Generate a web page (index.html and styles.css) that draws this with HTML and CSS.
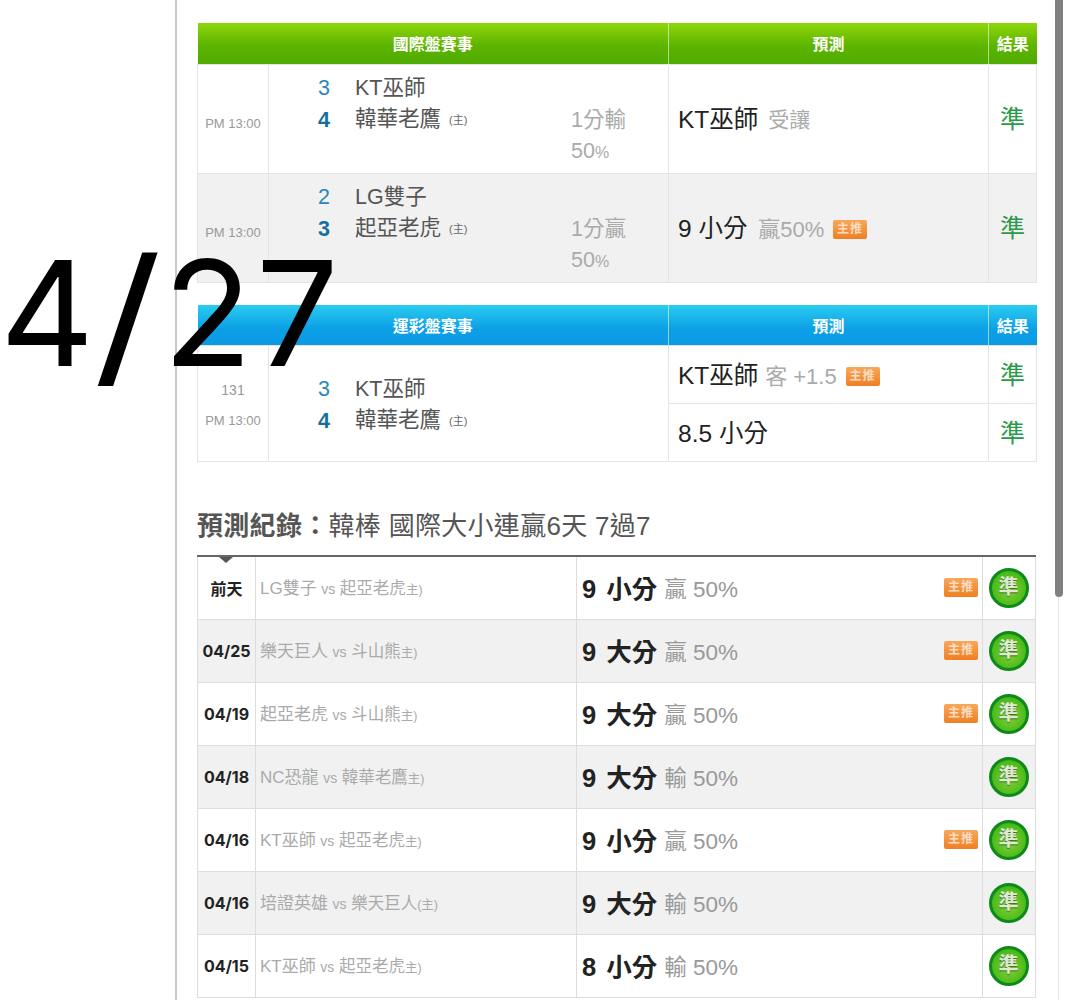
FILE: index.html
```html
<!DOCTYPE html>
<html lang="zh-Hant">
<head>
<meta charset="utf-8">
<title>預測紀錄</title>
<link rel="stylesheet" href="styles.css">
</head>
<body>
<div class="page">
  <main class="main">
    <table class="games first">
      <colgroup><col class="c-time"><col class="c-game"><col class="c-pred"><col class="c-res"></colgroup>
      <thead class="green"><tr><th colspan="2">國際盤賽事</th><th>預測</th><th>結果</th></tr></thead>
      <tbody>
        <tr class="tall">
          <td class="time">PM 13:00</td>
          <td><div class="match">
            <span class="score">3</span><span class="team">KT巫師</span>
            <b class="score">4</b><span class="team">韓華老鷹 <small>(主)</small></span><span class="line">1分輸</span>
            <span class="line pct">50<small>%</small></span>
          </div></td>
          <td class="pred">KT巫師 <em class="concede">受讓</em></td>
          <td class="res">準</td>
        </tr>
        <tr class="tall alt">
          <td class="time">PM 13:00</td>
          <td><div class="match">
            <span class="score">2</span><span class="team">LG雙子</span>
            <b class="score">3</b><span class="team">起亞老虎 <small>(主)</small></span><span class="line">1分贏</span>
            <span class="line pct">50<small>%</small></span>
          </div></td>
          <td class="pred">9 小分 <em>贏50%</em> <i class="badge">主推</i></td>
          <td class="res">準</td>
        </tr>
      </tbody>
    </table>

    <table class="games">
      <colgroup><col class="c-time"><col class="c-game"><col class="c-pred"><col class="c-res"></colgroup>
      <thead class="blue"><tr><th colspan="2">運彩盤賽事</th><th>預測</th><th>結果</th></tr></thead>
      <tbody>
        <tr class="short">
          <td class="time lone" rowspan="2"><div class="num">131</div>PM 13:00</td>
          <td rowspan="2"><div class="match">
            <span class="score">3</span><span class="team">KT巫師</span>
            <b class="score">4</b><span class="team">韓華老鷹 <small>(主)</small></span>
          </div></td>
          <td class="pred">KT巫師 <em class="guest">客 +1.5</em> <i class="badge">主推</i></td>
          <td class="res">準</td>
        </tr>
        <tr class="short">
          <td class="pred">8.5 小分</td>
          <td class="res">準</td>
        </tr>
      </tbody>
    </table>

    <h2 class="title"><strong>預測紀錄：</strong>韓棒 國際大小連贏6天 7過7</h2>

    <div class="history-wrap">
      <span class="pointer"></span>
      <table class="history">
        <colgroup><col class="h-date"><col class="h-teams"><col class="h-pred"><col class="h-res"></colgroup>
        <tbody>
          <tr>
            <td class="date">前天</td>
            <td class="vs"><span>LG雙子</span> <small>vs</small> 起亞老虎<u>主)</u></td>
            <td class="call"><div class="call-row"><b>9 小分</b> <em>贏 50%</em><i class="badge">主推</i></div></td>
            <td class="hit"><span class="ball">準</span></td>
          </tr>
          <tr class="alt">
            <td class="date">04/25</td>
            <td class="vs"><span>樂天巨人</span> <small>vs</small> 斗山熊<u>主)</u></td>
            <td class="call"><div class="call-row"><b>9 大分</b> <em>贏 50%</em><i class="badge">主推</i></div></td>
            <td class="hit"><span class="ball">準</span></td>
          </tr>
          <tr>
            <td class="date">04/19</td>
            <td class="vs"><span>起亞老虎</span> <small>vs</small> 斗山熊<u>主)</u></td>
            <td class="call"><div class="call-row"><b>9 大分</b> <em>贏 50%</em><i class="badge">主推</i></div></td>
            <td class="hit"><span class="ball">準</span></td>
          </tr>
          <tr class="alt">
            <td class="date">04/18</td>
            <td class="vs"><span>NC恐龍</span> <small>vs</small> 韓華老鷹<u>主)</u></td>
            <td class="call"><div class="call-row"><b>9 大分</b> <em>輸 50%</em></div></td>
            <td class="hit"><span class="ball">準</span></td>
          </tr>
          <tr>
            <td class="date">04/16</td>
            <td class="vs"><span>KT巫師</span> <small>vs</small> 起亞老虎<u>主)</u></td>
            <td class="call"><div class="call-row"><b>9 小分</b> <em>贏 50%</em><i class="badge">主推</i></div></td>
            <td class="hit"><span class="ball">準</span></td>
          </tr>
          <tr class="alt">
            <td class="date">04/16</td>
            <td class="vs"><span>培證英雄</span> <small>vs</small> 樂天巨人<u>(主)</u></td>
            <td class="call"><div class="call-row"><b>9 大分</b> <em>輸 50%</em></div></td>
            <td class="hit"><span class="ball">準</span></td>
          </tr>
          <tr>
            <td class="date">04/15</td>
            <td class="vs"><span>KT巫師</span> <small>vs</small> 起亞老虎<u>主)</u></td>
            <td class="call"><div class="call-row"><b>8 小分</b> <em>輸 50%</em></div></td>
            <td class="hit"><span class="ball">準</span></td>
          </tr>
        </tbody>
      </table>
    </div>
  </main>
  <span class="thumb"></span>
  <div class="stamp">4<span class="slash">/</span>27</div>
</div>
</body>
</html>
```

FILE: styles.css
```css
* { box-sizing: border-box; }
html, body { margin: 0; padding: 0; height: 1000px; overflow: hidden; background: #fff; }
body { font-family: "Liberation Sans", "Noto Sans CJK TC", sans-serif; color: #222; }

.page { position: relative; height: 1000px; overflow: hidden; padding-left: 175px; }
.main {
  position: relative;
  width: 884px;
  height: 1000px;
  padding: 23px 0 0 20px;
  border-left: 2px solid #c9c9c9;
  border-right: 1px solid #e2e2e2;
  overflow: hidden;
}
.thumb {
  position: absolute;
  left: 1055px;
  top: -10px;
  width: 8px;
  height: 607px;
  background: #808080;
  border-radius: 0 0 4px 4px;
}
.stamp {
  position: absolute;
  left: 0;
  top: 228px;
  font-family: "Inter", "Liberation Sans", sans-serif;
  font-weight: 400;
  font-size: 146px;
  letter-spacing: 4px;
  line-height: 170px;
  color: #000;
  white-space: nowrap;
}
.slash { display: inline-block; margin: 0 4px; transform: scale(1.3, 1.05); }

/* match tables */
.games {
  width: 839px;
  table-layout: fixed;
  border-collapse: collapse;
  margin-bottom: 23px;
}
.games.first { margin-bottom: 22px; }
.c-time { width: 71px; }
.c-game { width: 400px; }
.c-pred { width: 320px; }
.c-res { width: 48px; }
.games th {
  height: 41px;
  padding: 0;
  font-size: 16px;
  font-weight: bold;
  color: #fff;
  border-left: 1px solid rgba(255, 255, 255, .55);
}
.games th:first-child { border-left: 0; }
.green th { background: linear-gradient(#8fd60a, #5db400 55%, #4fab00); }
.blue th { background: linear-gradient(#2accf0, #0c9fe6 60%, #0a9ae4); }
.games td { border: 1px solid #e4e4e4; padding: 0; vertical-align: middle; }
.tall td { height: 109px; }
.short td { height: 58px; }
.alt td { background: #f1f1f1; }

.time { text-align: center; font-size: 13px; color: #999; padding-top: 10px !important; }
.time.lone { padding-top: 3px !important; }
.num { font-size: 14px; margin-bottom: 15px; }
.match {
  display: grid;
  grid-template-columns: 36px 203px 97px;
  grid-auto-rows: 32px;
  column-gap: 13px;
  padding: 2px 0 0 37px;
  font-size: 21.5px;
  line-height: 32px;
  align-items: center;
}
.score { grid-column: 1; text-align: center; color: #2a87b8; font-weight: normal; }
b.score { font-weight: bold; color: #146f9e; }
.team { grid-column: 2; color: #555; white-space: nowrap; }
.team small { font-size: 11px; color: #666; vertical-align: 2px; margin-left: 2px; }
.line { grid-column: 3; color: #aaa; white-space: nowrap; }
.pct small { font-size: 16px; }

.pred { padding: 0 0 2px 9px !important; font-size: 24.5px; color: #222; white-space: nowrap; }
.pred em { font-style: normal; font-size: 22px; color: #aaa; margin-left: 4px; }
.pred .concede { font-size: 21px; margin-left: 3px; vertical-align: 1px; }
.pred .guest { margin-left: 0; }
.pred .badge { margin-left: 2px; vertical-align: 4px; }
.res { padding-bottom: 4px !important; text-align: center; font-size: 25px; color: #2a9a4a; }

.badge {
  display: inline-block;
  width: 34px;
  height: 19px;
  border-radius: 2px;
  background: linear-gradient(#f7a85c, #ef7f22);
  color: #fbdcc0;
  font-style: normal;
  font-weight: bold;
  font-size: 12px;
  letter-spacing: 1px;
  line-height: 19px;
  text-align: center;
}

/* history */
.title { margin: 44px 0 0; font-size: 26px; line-height: 40px; font-weight: normal; color: #555; letter-spacing: .3px; }
.title strong { font-weight: bold; }
.history-wrap { position: relative; margin-top: 9px; }
.pointer {
  position: absolute;
  left: 22px;
  top: 2px;
  border-left: 7px solid transparent;
  border-right: 7px solid transparent;
  border-top: 6px solid #555;
}
.history {
  width: 838px;
  table-layout: fixed;
  border-collapse: collapse;
  border-top: 2px solid #666;
}
.h-date { width: 58px; }
.h-teams { width: 321px; }
.h-pred { width: 406px; }
.h-res { width: 53px; }
.history td { height: 63px; padding: 0; border: 1px solid #ddd; vertical-align: middle; }
.date { text-align: center; font-family: "Inter", "Noto Sans CJK TC", sans-serif; font-size: 16px; font-weight: bold; color: #222; }
.vs { padding: 0 0 2px 4px !important; font-size: 16.5px; color: #aaa; white-space: nowrap; }
.vs span { font-size: 17px; }
.vs small { font-size: 14px; }
.vs u { text-decoration: none; font-size: 12.5px; }
.call-row { display: flex; align-items: center; padding: 0 3px 2px 5px; }
.call-row b { font-size: 25.5px; color: #222; word-spacing: 3px; }
.call-row em { font-style: normal; font-size: 22.5px; color: #999; margin-left: 7px; margin-right: auto; }
.call-row .badge { margin-right: 1px; margin-top: 1px; }
.hit { text-align: center; }
.ball {
  display: inline-block;
  width: 40px;
  height: 40px;
  margin: 1px 1px 0 0;
  border-radius: 50%;
  border: 3px solid #0e8a1a;
  background: radial-gradient(circle at 50% 55%, #86d235, #4cbb1c 65%, #26a31c);
  color: #dfe9d2;
  font-size: 20px;
  font-weight: bold;
  line-height: 32px;
  text-shadow: 0 1px 1px #3d6b22;
  vertical-align: middle;
}
```
